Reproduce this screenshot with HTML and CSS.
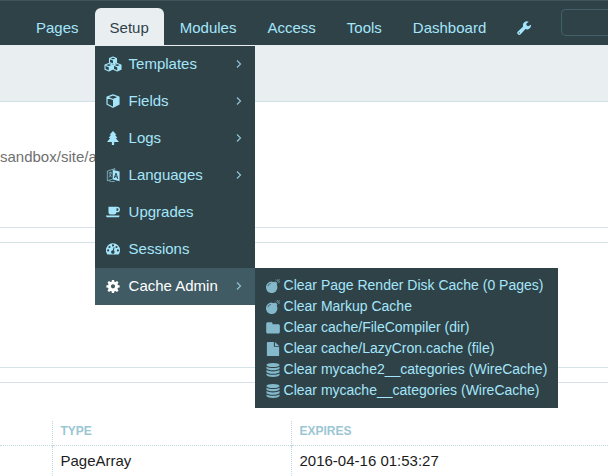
FILE: index.html
```html
<!DOCTYPE html>
<html lang="en">
<head>
<meta charset="utf-8">
<title>Cache Admin</title>
<link rel="stylesheet" href="styles.css">
</head>
<body>
<svg class="sprite" aria-hidden="true">
  <symbol id="cubes" viewBox="0 0 18 16">
    <g fill="none" stroke="currentColor" stroke-width="1.1" stroke-linejoin="round">
      <path d="M9 1l3.500 1.400v4L9 8 5.500 6.400v-4zM5.500 2.400L9 4l3.500-1.600"/>
      <path d="M4.800 7.500l3.700 1.500v4.200l-3.700 1.800L1 13.200V9zM1 9l3.800 1.700L8.500 9"/>
      <path d="M13.200 7.500L17 9v4.200L13.200 15l-3.700-1.800V9zM9.500 9l3.700 1.700L17 9"/>
    </g>
    <path fill="currentColor" d="M9 4l3.500-1.500v4L9 8zM4.800 10.700L8.500 9v4.200L4.800 15zM13.200 10.700L17 9v4.200L13.200 15z"/>
  </symbol>
  <symbol id="cube" viewBox="0 0 16 16">
    <path fill="none" stroke="currentColor" stroke-width="1.400" stroke-linejoin="round" d="M8 1l6.800 2.500v8.300L8 15.200l-6.800-3.400V3.500zM1.200 3.500L8 6.300l6.800-2.800"/>
    <path fill="currentColor" d="M8 6.300l6.800-2.800v8.300L8 15.200z"/>
  </symbol>
  <symbol id="tree" viewBox="0 0 16 16">
    <path fill="currentColor" d="M8 0l4 4.200h-1.700L13 8h-1.800l3.600 4.500H9.300V16H6.700v-3.500H1.200L4.800 8H3l2.700-3.800H4z"/>
  </symbol>
  <symbol id="language" viewBox="0 0 16 16">
    <path fill="none" stroke="currentColor" stroke-width=".7" d="M1.500 3.500L8 1.500v11l-6.500 2zM8 1.500l2-.9v2M3 14.500l3 1h4M3 6l3.500-1M4.700 4.300v1.200M6 5.500c-.4 2.600-1.300 4.200-3 5.500M3.500 7.500l3 2.500"/>
    <path fill="currentColor" fill-rule="evenodd" d="M8 2.200L15.500 4v11.200L8 13zM11 5.500l-2 5.700 1.200.3.400-1.200 1.800.5.400 1.400 1.200.3-1.800-6.600zM11.500 7.200l.6 2.400-1.200-.3z"/>
  </symbol>
  <symbol id="coffee" viewBox="0 0 17 16">
    <path fill="currentColor" fill-rule="evenodd" d="M3 1.500h10.500a3.400 3.400 0 0 1 0 6.900h-.8a2.600 2.600 0 0 1-2.400 2.600H5.500A2.500 2.500 0 0 1 3 8.500zM12.800 3.300v3.400h.7a1.700 1.700 0 0 0 0-3.400zM0 12.200h16.500c0 1.400-1 2.300-2.400 2.300H2.400C1 14.500 0 13.600 0 12.200z"/>
  </symbol>
  <symbol id="gauge" viewBox="0 0 16 16">
    <path fill="currentColor" fill-rule="evenodd" d="M8 1.500a8 8 0 0 1 8 8c0 1.600-.4 3-1.200 4.300-.2.400-.4.500-.8.500H2c-.4 0-.6-.1-.8-.5A8 8 0 0 1 8 1.500zM8 2.700a1.200 1.200 0 1 0 0 2.400 1.200 1.200 0 0 0 0-2.400zM4 4.500a1.200 1.200 0 1 0 0 2.400 1.200 1.200 0 0 0 0-2.400zM12 4.500a1.200 1.200 0 1 0 0 2.400 1.200 1.200 0 0 0 0-2.400zM2.400 8.400a1.200 1.200 0 1 0 0 2.400 1.200 1.200 0 0 0 0-2.400zM13.600 8.400a1.200 1.200 0 1 0 0 2.400 1.200 1.200 0 0 0 0-2.400zM8.700 6L7.800 9.500a2 2 0 1 0 1.100.3L9.800 6.300z"/>
  </symbol>
  <symbol id="cog" viewBox="0 0 16 16">
    <path fill="currentColor" fill-rule="evenodd" d="M6.800 1h2.400l.4 2 1.300.5 1.700-1.200 1.700 1.700-1.200 1.700.5 1.200 2 .4v2.400l-2 .4-.5 1.300 1.200 1.700-1.700 1.700-1.700-1.200-1.300.5-.4 2H6.800l-.4-2-1.300-.5-1.700 1.200-1.700-1.700 1.200-1.700-.5-1.300-2-.4V7.300l2-.4.5-1.200L1.700 4l1.700-1.700 1.700 1.200L6.400 3zM8 6a2.400 2.400 0 1 0 0 4.800A2.400 2.400 0 0 0 8 6z"/>
  </symbol>
  <symbol id="wrench" viewBox="0 0 16 16">
    <path fill="currentColor" fill-rule="evenodd" d="M9.700 9.200L4.200 15.100a2.100 2.100 0 0 1-3.200-3.200l6-5.600A4.500 4.500 0 0 1 13.500.9l-2.700 2v2l1.900 1.200 3.200-1.800A4.500 4.500 0 0 1 9.700 9.200zM2.700 12.800a.7.7 0 1 0 0 1.400.7.7 0 0 0 0-1.400z"/>
  </symbol>
  <symbol id="bomb" viewBox="0 0 16 16">
    <path fill="currentColor" fill-rule="evenodd" d="M6.600 3c1 0 2 .2 2.800.6l.9-.9 2.800 2.800-.9.900A6.500 6.500 0 1 1 6.600 3zM2.600 8.400c.5-1.700 1.500-2.700 3.100-3.200l-.2-.7C3.600 5 2.400 6.300 1.900 8.200z"/>
    <path fill="none" stroke="currentColor" stroke-width=".9" d="M12 4l1.200-1.200M13.500.3v1.500M14.300 2.600h1.500M14 1.800l1.300-1.300M14 3.300l1.200 1.200M12.500 1.900L11.400.8"/>
  </symbol>
  <symbol id="folder" viewBox="0 0 16 16">
    <path fill="currentColor" d="M2 1.500h3.800c1 0 1.700.7 1.700 1.700v.5H14c1 0 1.800.8 1.800 1.800v7c0 1-.8 1.800-1.800 1.800H2c-1 0-1.800-.8-1.800-1.800V3.300C.2 2.300 1 1.500 2 1.500z"/>
  </symbol>
  <symbol id="file" viewBox="0 0 16 16">
    <path fill="currentColor" d="M2 0h7v5.500h6V15c0 .6-.4 1-1 1H2c-.6 0-1-.4-1-1V1c0-.6.4-1 1-1zM10.200 0L15 4.500h-4.800z"/>
  </symbol>
  <symbol id="database" viewBox="0 0 16 16">
    <ellipse fill="currentColor" cx="8" cy="2.300" rx="7.500" ry="2.300"/>
    <path fill="currentColor" d="M.5 4.200c2.500 2 12.500 2 15 0v2.100c-1.500 2.700-13.500 2.700-15 0zM.5 8.100c2.500 2 12.500 2 15 0v2.100c-1.500 2.700-13.500 2.700-15 0zM.5 12c2.500 2 12.500 2 15 0v1.700c-1.500 3-13.500 3-15 0z"/>
  </symbol>
  <symbol id="chevron" viewBox="0 0 8 10">
    <path fill="none" stroke="currentColor" stroke-width="1.200" d="M2 1.500L5.500 5 2 8.500"/>
  </symbol>
</svg>

<header class="masthead">
  <nav class="topnav" aria-label="Main">
    <a class="tab" href="#">Pages</a>
    <div class="tab-group">
      <a class="tab tab-open" href="#">Setup</a>
      <ul class="menu">
        <li><a class="menu-item" href="#"><svg class="icon icon-wide"><use href="#cubes"/></svg>Templates<svg class="chevron"><use href="#chevron"/></svg></a></li>
        <li><a class="menu-item" href="#"><svg class="icon"><use href="#cube"/></svg>Fields<svg class="chevron"><use href="#chevron"/></svg></a></li>
        <li><a class="menu-item" href="#"><svg class="icon"><use href="#tree"/></svg>Logs<svg class="chevron"><use href="#chevron"/></svg></a></li>
        <li><a class="menu-item" href="#"><svg class="icon"><use href="#language"/></svg>Languages<svg class="chevron"><use href="#chevron"/></svg></a></li>
        <li><a class="menu-item" href="#"><svg class="icon"><use href="#coffee"/></svg>Upgrades</a></li>
        <li><a class="menu-item" href="#"><svg class="icon"><use href="#gauge"/></svg>Sessions</a></li>
        <li class="has-submenu">
          <a class="menu-item menu-item-active" href="#"><svg class="icon"><use href="#cog"/></svg>Cache Admin<svg class="chevron"><use href="#chevron"/></svg></a>
          <ul class="submenu">
            <li><a class="submenu-item" href="#"><svg class="subicon"><use href="#bomb"/></svg>Clear Page Render Disk Cache (0 Pages)</a></li>
            <li><a class="submenu-item" href="#"><svg class="subicon"><use href="#bomb"/></svg>Clear Markup Cache</a></li>
            <li><a class="submenu-item" href="#"><svg class="subicon"><use href="#folder"/></svg>Clear cache/FileCompiler (dir)</a></li>
            <li><a class="submenu-item" href="#"><svg class="subicon"><use href="#file"/></svg>Clear cache/LazyCron.cache (file)</a></li>
            <li><a class="submenu-item" href="#"><svg class="subicon"><use href="#database"/></svg>Clear mycache2__categories (WireCache)</a></li>
            <li><a class="submenu-item" href="#"><svg class="subicon"><use href="#database"/></svg>Clear mycache__categories (WireCache)</a></li>
          </ul>
        </li>
      </ul>
    </div>
    <a class="tab" href="#">Modules</a>
    <a class="tab" href="#">Access</a>
    <a class="tab" href="#">Tools</a>
    <a class="tab" href="#">Dashboard</a>
    <a class="tab" href="#" aria-label="Utilities"><svg class="icon"><use href="#wrench"/></svg></a>
  </nav>
  <input class="search" type="search" aria-label="Search">
</header>
<div class="titlebar"></div>
<main>
  <section class="panel panel-first"><p class="path">sandbox/site/a</p></section>
  <section class="panel"></section>
  <section class="panel panel-last">
    <table class="caches">
      <thead><tr><td class="col-name"></td><th class="col-type" scope="col">Type</th><th scope="col">Expires</th></tr></thead>
      <tbody><tr><td></td><td>PageArray</td><td>2016-04-16 01:53:27</td></tr></tbody>
    </table>
  </section>
</main>
</body>
</html>
```
FILE: styles.css
```css
* { box-sizing: border-box; }

body {
  margin: 0;
  background: #fff;
  color: #1c1c1c;
  font: 15px/20px "Liberation Sans", Arial, sans-serif;
}

a { color: inherit; text-decoration: none; }
ul { margin: 0; padding: 0; list-style: none; }

.sprite { position: absolute; width: 0; height: 0; }

.masthead {
  display: flex;
  height: 45px;
  padding-left: 21px;
  border-top: 1px solid #3d545d;
  background: #2f4248;
  color: #a5e6fa;
}

.topnav {
  display: flex;
  flex: none;
  align-items: flex-end;
  gap: 1px;
}

.tab {
  display: flex;
  align-items: center;
  height: 37px;
  padding: 2px 15px 0;
  border-radius: 6px 6px 0 0;
}

.tab-open { background: #e9eef1; color: #2f4248; }
.tab-group { position: relative; }

.search {
  flex: 1;
  min-width: 0;
  height: 27px;
  margin: 8px 0 0 15px;
  padding: 0 8px;
  border: 1px solid #42606a;
  border-right: 0;
  border-radius: 5px 0 0 5px;
  background: transparent;
  color: inherit;
  font: inherit;
}

.icon { flex: none; width: 14px; height: 14px; }
.icon-wide { width: 18px; height: 16px; margin: 0 -2px; }

.menu {
  position: absolute;
  z-index: 2;
  top: 100%;
  left: 0;
  width: 160px;
  margin-top: 1px;
  background: #2f4248;
}

.menu-item {
  display: flex;
  align-items: center;
  gap: 8px;
  height: 37px;
  padding: 0 12px 1px 11px;
}

.menu-item .icon { margin-right: 1px; }
.menu-item .icon-wide { margin-right: -1px; }

.menu-item-active { background: #415b65; color: #fff; }
.chevron { width: 8px; height: 10px; margin-left: auto; color: #8fc3d2; }
.has-submenu { position: relative; }

.submenu {
  position: absolute;
  top: 0;
  left: 100%;
  padding: 7px 11px;
  background: #2f4248;
  font-size: 14px;
  line-height: 21px;
  white-space: nowrap;
}

.submenu-item { display: flex; align-items: center; gap: 4px; }
.subicon { width: 14px; height: 14px; color: #83b9ca; }

.titlebar {
  height: 57px;
  border-bottom: 1px solid #d2e1e8;
  background: #e9eef1;
}

.panel {
  height: 126px;
  margin-bottom: 14px;
  border: solid #d5e3e8;
  border-width: 1px 0;
}

.panel-first { border-top: 0; }
.panel-last { height: auto; margin-bottom: 0; padding-top: 38px; border-bottom: 0; }
.path { margin: 0; padding-top: 45px; color: #707070; }

.caches { width: 100%; border-collapse: collapse; }
.caches th, .caches td {
  padding: 5px 8px;
  border-left: 1px dotted #c3d8df;
  text-align: left;
}
.caches tr > :first-child { border-left: 0; }
.caches thead { border-bottom: 1px dotted #c3d8df; }
.caches th {
  padding: 0 8px 4px;
  color: #9bc6d4;
  font-size: 12px;
  text-transform: uppercase;
}
.caches .col-name { width: 52px; padding: 12px 0; }
.col-type { width: 239px; }
```
